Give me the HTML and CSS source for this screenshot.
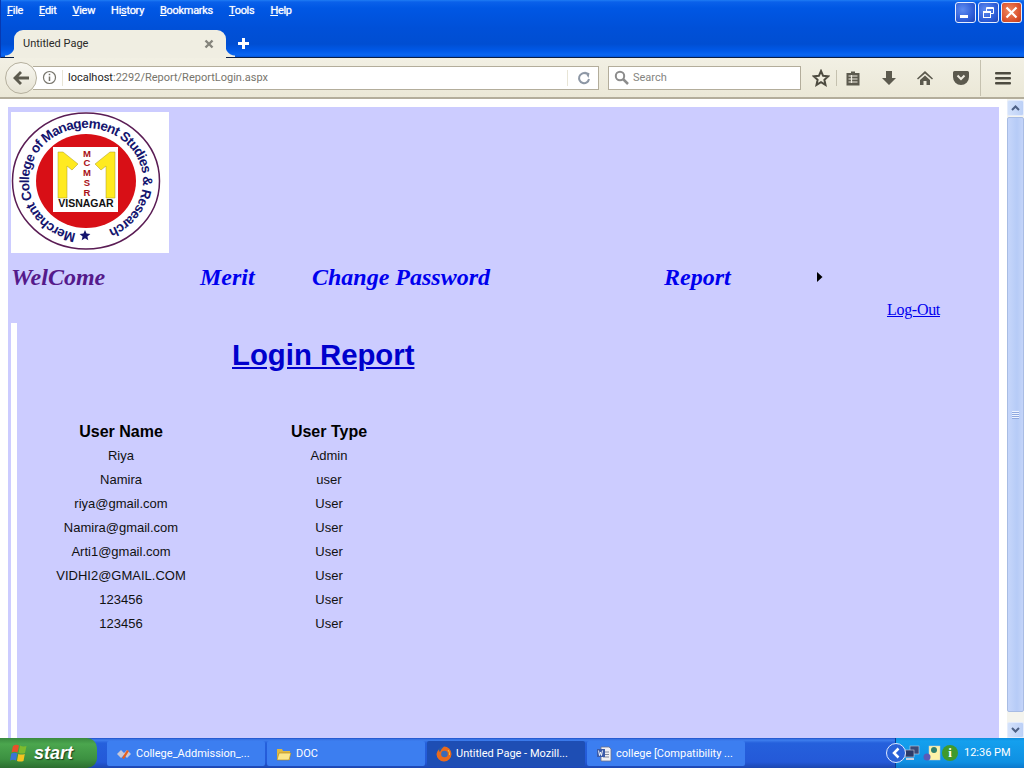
FILE: index.html
```html
<!DOCTYPE html>
<html lang="en">
<head>
<meta charset="utf-8">
<title>Untitled Page</title>
<link rel="stylesheet" href="styles.css">
</head>
<body>
<div class="screen">
  <header class="titlebar">
    <div class="menu-row">
      <nav class="menubar">
        <span><u>F</u>ile</span><span><u>E</u>dit</span><span><u>V</u>iew</span><span>Hi<u>s</u>tory</span><span><u>B</u>ookmarks</span><span><u>T</u>ools</span><span><u>H</u>elp</span>
      </nav>
      <div class="winbtns">
        <div class="winbtn"><svg width="19" height="19" viewBox="0 0 19 19"><rect x="4" y="12" width="8" height="3" fill="#fff"/></svg></div>
        <div class="winbtn"><svg width="19" height="19" viewBox="0 0 19 19" fill="none" stroke="#fff"><rect x="4.500" y="8.500" width="7" height="6"/><path d="M4.500 9.500h7M7.500 8V4.500h7v6H12M7.500 5.500h7"/></svg></div>
        <div class="winbtn winclose"><svg width="19" height="19" viewBox="0 0 19 19" stroke="#fff" stroke-width="2.200"><path d="M4.500 4.500l10 10M14.500 4.500l-10 10"/></svg></div>
      </div>
    </div>
    <div class="tab-row">
      <div class="tab">
        <span class="tab-label">Untitled Page</span>
        <svg class="tab-x" width="10" height="10" viewBox="0 0 10 10" stroke="#85847c" stroke-width="2.400"><path d="M1.500 1.500l7 7M8.500 1.500l-7 7"/></svg>
      </div>
      <svg class="tab-new" width="13" height="13" viewBox="0 0 13 13"><path d="M5 1h3v4h4v3H8v4H5V8H1V5h4z" fill="#fff"/></svg>
    </div>
  </header>

  <div class="toolbar">
    <div class="back">
      <svg width="18" height="16" viewBox="0 0 18 16"><path d="M8 1l2 2-3.500 3.500H17v3H6.500L10 13l-2 2L1 8z" fill="#5c5a4e"/></svg>
    </div>
    <div class="urlbar">
      <svg class="info" width="15" height="15" viewBox="0 0 15 15" fill="none" stroke="#77756c" stroke-width="1.200"><circle cx="7.500" cy="7.500" r="6"/><path d="M7.500 6.500v4.500M7.500 3.800v1.400" stroke-width="1.500"/></svg>
      <span class="urlsep"></span>
      <span class="url"><span class="host">localhost</span>:2292/Report/ReportLogin.aspx</span>
      <span class="urlsep urlsep-right"></span>
      <svg class="reload" width="14" height="14" viewBox="0 0 14 14" fill="none" stroke="#8d97a5" stroke-width="2"><path d="M12 8a5 5 0 1 1-3-5.500"/><path d="M7.500 .5l5 1.700-1 4.800z" fill="#8d97a5" stroke="none"/></svg>
    </div>
    <div class="searchbar">
      <svg width="16" height="16" viewBox="0 0 16 16" fill="none" stroke="#8c8c8c" stroke-width="2"><circle cx="6" cy="6" r="4.200"/><path d="M9 9l5 5" stroke-width="2.500"/></svg>
      <span>Search</span>
    </div>
    <div class="tools">
      <svg class="t-star" width="18" height="18" viewBox="0 0 18 18"><path d="M9 2l2.100 4.800 5.200.5-3.900 3.500 1.100 5.100L9 13.200l-4.500 2.700 1.100-5.100L1.700 7.300l5.200-.5z" fill="none" stroke="#4d4b40" stroke-width="2"/></svg>
      <span class="t-sep"></span>
      <svg class="t-clip" width="16" height="16" viewBox="0 0 16 16"><path d="M6 1.500h4V3h4.500v12.500h-13V3H6z" fill="#5c5a4e"/><path d="M3.500 6h9M3.500 9h9M3.500 12h9M6.500 5v8" stroke="#efece0" stroke-width="1.200"/></svg>
      <svg class="t-down" width="16" height="16" viewBox="0 0 16 16"><path d="M5 1h6v7h4l-7 7-7-7h4z" fill="#5c5a4e"/></svg>
      <svg class="t-home" width="18" height="16" viewBox="0 0 18 16"><path d="M9 1L1 8.500l1 1L9 3.500l7 6 1-1zM4 10l5-4.500 5 4.500v5h-3.500v-4h-3v4H4z" fill="#5c5a4e"/></svg>
      <svg class="t-pocket" width="18" height="16" viewBox="0 0 18 16"><path d="M2.500 1h13A1.500 1.500 0 0 1 17 2.500V7a8 8 0 0 1-16 0V2.500A1.500 1.500 0 0 1 2.500 1z" fill="#5c5a4e"/><path d="M5.500 5.500L9 9l3.500-3.500" fill="none" stroke="#efece0" stroke-width="2"/></svg>
      <span class="t-sep t-sep-tall"></span>
      <svg class="t-menu" width="16" height="14" viewBox="0 0 16 14" fill="#4d4b40"><rect width="16" height="2.500" y="1" rx="1"/><rect width="16" height="2.500" y="6" rx="1"/><rect width="16" height="2.500" y="11" rx="1"/></svg>
    </div>
  </div>

  <div class="viewport">
    <main class="page">
      <div class="logo">
        <svg width="158" height="141" viewBox="0 0 158 141">
          <defs>
            <path id="ringtext" d="M65 121.200 A57 53 0 1 1 88 120.600"/>
          </defs>
          <ellipse cx="75" cy="69" rx="73.500" ry="68" fill="#fff" stroke="#5a1c54" stroke-width="1.500"/>
          <ellipse cx="75" cy="69" rx="50" ry="47" fill="#d80f16"/>
          <text class="ring" font-size="13.500"><textPath href="#ringtext" textLength="312" lengthAdjust="spacing">Merchant College of Management Studies &amp; Research</textPath></text>
          <rect x="42" y="35" width="65" height="65" fill="#fff"/>
          <path d="M47 40h5l15 12-6 6-5-4v32h-9zM104 40h-5L84 52l6 6 5-4v32h9z" fill="#ffea20" stroke="#a89a20" stroke-width=".5"/>
          <text class="mcmsr"><tspan x="76" y="45">M</tspan><tspan x="76" y="54">C</tspan><tspan x="76" y="64">M</tspan><tspan x="76" y="74">S</tspan><tspan x="76" y="84">R</tspan></text>
          <text class="visnagar" x="75" y="95">VISNAGAR</text>
          <path class="ringstar" d="M74 118l1.500 3.600 3.900.3-3 2.500.9 3.800-3.300-2-3.300 2 .9-3.800-3-2.500 3.900-.3z"/>
        </svg>
      </div>
      <nav class="sitenav">
        <a class="visited" href="#">WelCome</a>
        <a href="#">Merit</a>
        <a href="#">Change Password</a>
        <a href="#">Report</a>
        <svg class="nav-arrow" width="6" height="10" viewBox="0 0 6 10"><path d="M0 0l5.500 5L0 10z" fill="#000"/></svg>
      </nav>
      <div class="logout-row"><a href="#">Log-Out</a></div>
      <section class="panel">
        <h1 class="report-title"><a href="#">Login Report</a></h1>
        <table class="report">
          <thead>
            <tr><th>User Name</th><th>User Type</th></tr>
          </thead>
          <tbody>
            <tr><td>Riya</td><td>Admin</td></tr>
            <tr><td>Namira</td><td>user</td></tr>
            <tr><td>riya@gmail.com</td><td>User</td></tr>
            <tr><td>Namira@gmail.com</td><td>User</td></tr>
            <tr><td>Arti1@gmail.com</td><td>User</td></tr>
            <tr><td>VIDHI2@GMAIL.COM</td><td>User</td></tr>
            <tr><td>123456</td><td>User</td></tr>
            <tr><td>123456</td><td>User</td></tr>
          </tbody>
        </table>
      </section>
    </main>
    <aside class="scrollbar">
      <div class="sb-btn"><svg width="9" height="6" viewBox="0 0 9 6" fill="none" stroke="#4d6185" stroke-width="2"><path d="M1 5l3.500-3.500L8 5"/></svg></div>
      <div class="sb-thumb"><span class="grip"></span></div>
      <div class="sb-btn sb-down"><svg width="9" height="6" viewBox="0 0 9 6" fill="none" stroke="#4d6185" stroke-width="2"><path d="M1 1l3.500 3.500L8 1"/></svg></div>
    </aside>
  </div>

  <footer class="taskbar">
    <div class="start">
      <svg width="20" height="18" viewBox="0 0 20 18"><path d="M3 2q3-2 6-.5l-1.500 7q-3-1.500-6 0z" fill="#e8502a"/><path d="M10 1.500q3 1.500 6.500.5L15 9q-3 1-6.500 0z" fill="#7dbb2e"/><path d="M1.300 9.500q3-1.500 6 0l-1.300 7q-3-1.500-6 0z" fill="#3c74d6"/><path d="M8.300 10q3 1 6.500 0l-1.300 7q-3 1-6.500 0z" fill="#f3c420"/></svg>
      <span>start</span>
    </div>
    <div class="tasks">
      <div class="task">
        <svg width="16" height="16" viewBox="0 0 16 16"><path d="M1 8l4-4 3 3 3-3 4 4-4 4-3-3-3 3z" fill="#c8c8d8"/><path d="M6 12l5-8 2 1-5 8z" fill="#e8601c"/></svg>
        <span>College_Addmission_...</span>
      </div>
      <div class="task">
        <svg width="16" height="14" viewBox="0 0 16 14"><path d="M1 2h5l1 2h7v9H1z" fill="#e0b840"/><path d="M1 13l2-7h12l-2 7z" fill="#fbe68c" stroke="#a88420" stroke-width=".6"/></svg>
        <span>DOC</span>
      </div>
      <div class="task task-active">
        <svg width="16" height="16" viewBox="0 0 16 16"><circle cx="8" cy="8" r="7.500" fill="#2a5aa8"/><path d="M8 .5a7.500 7.500 0 1 1-7.500 7.500q.5-3 2.500-4.500 0 2 1 2.500Q5 3 8 .5z" fill="#ea6a1c"/><circle cx="8.500" cy="8" r="3.300" fill="#3a6ab8"/><path d="M12 4q2 2 1.500 5" stroke="#f8c030" fill="none"/></svg>
        <span>Untitled Page - Mozill...</span>
      </div>
      <div class="task">
        <svg width="16" height="16" viewBox="0 0 16 16"><path d="M5 1h8l2 2v12H5z" fill="#f0f0f4" stroke="#6a7088" stroke-width=".8"/><path d="M7 6h6M7 8.500h6M7 11h6" stroke="#8088a0"/><rect x="1" y="3" width="8" height="8" fill="#3a5aa8"/><path d="M2.500 4.500l1 5 1-3.500 1 3.500 1-5" stroke="#fff" fill="none" stroke-width=".9"/></svg>
        <span>college [Compatibility ...</span>
      </div>
    </div>
    <div class="tray">
      <div class="tray-back"><svg width="8" height="12" viewBox="0 0 8 12" fill="none" stroke="#fff" stroke-width="2.500"><path d="M6.500 1.500L2 6l4.500 4.500"/></svg></div>
      <svg width="16" height="16" viewBox="0 0 16 16"><rect x="6" y="1" width="9" height="8" fill="#3a4a78" stroke="#c8d0e0" stroke-width=".6"/><rect x="1" y="5" width="9" height="7" fill="#2a3a68" stroke="#c8d0e0" stroke-width=".6"/><rect x="2" y="13" width="8" height="2" fill="#c8d0e0"/></svg>
      <svg class="tray-note" width="18" height="16" viewBox="0 0 18 16"><rect x="6" y="1" width="11" height="14" fill="#fdf2a8" stroke="#ccc" stroke-width=".5"/><circle cx="11" cy="5" r="3" fill="#2f7f6f"/><circle cx="4" cy="12" r="3.500" fill="#5a5ab8"/></svg>
      <div class="tray-info">i</div>
      <span class="clock">12:36 PM</span>
    </div>
  </footer>
</div>
</body>
</html>
```

FILE: styles.css
```css
* { box-sizing: border-box; }
html, body { margin: 0; padding: 0; height: 100%; overflow: hidden; }
body { font-family: "Liberation Sans", Arial, sans-serif; }

.screen { width: 1024px; height: 768px; display: flex; flex-direction: column; background: #fff; }

/* Title bar */
.titlebar {
  height: 58px; flex: none; display: flex; flex-direction: column;
  background: linear-gradient(180deg, #1f7cf4 0, #0a60ea 2px, #0057e4 8px, #0050d8 28px, #004ed2 44px, #0058e6 50px, #0a66f2 55px, #0455d8 57px, #0a1e44 57px, #0a1e44 58px);
  border-left: 1px solid #0838b0;
}
.menu-row { height: 30px; display: flex; justify-content: space-between; align-items: flex-start; }
.menubar { display: flex; gap: 16px; padding: 3px 0 0 6px; font: 11px/15px Roboto, Tahoma, sans-serif; letter-spacing: -.3px; color: #fff; text-shadow: 0 0 1px #cfe0ff; }
.menubar u { text-decoration-thickness: 1px; text-underline-offset: 1px; }
.winbtns { display: flex; gap: 2px; padding: 2px 2px 0 0; }
.winbtn {
  width: 21px; height: 21px; display: flex; align-items: center; justify-content: center;
  border: 1px solid #e6eeff; border-radius: 3px;
  background: radial-gradient(circle at 35% 35%, #5f8cf0 0, #2f5ed8 60%, #1c44b8 100%);
}
.winclose { background: radial-gradient(circle at 40% 40%, #ee8a62 0, #dc5530 60%, #bf3a18 100%); }
.tab-row { height: 27px; display: flex; align-items: center; padding-left: 13px; }
.tab {
  position: relative;
  width: 212px; height: 28px; margin-top: 1px; display: flex; align-items: center; justify-content: space-between;
  padding: 0 12px 0 9px; background: #f0eee2; border-radius: 9px 9px 0 0;
  font: 11px/16px Roboto, Tahoma, sans-serif; color: #2a2a28;
}
.tab::before, .tab::after { content: ""; position: absolute; bottom: 1px; width: 9px; height: 11px; }
.tab::before { left: -9px; background: radial-gradient(circle at 0 0, transparent 9px, #f0eee2 10px); }
.tab::after { right: -9px; background: radial-gradient(circle at 100% 0, transparent 9px, #f0eee2 10px); }
.tab-new { margin-left: 11px; }

/* Toolbar */
.toolbar {
  height: 41px; flex: none; display: flex; align-items: center; padding: 0 0 0 5px;
  background: linear-gradient(180deg, #f2f0e4, #ebe8d7); border-bottom: 2px solid #b3ad9b;
}
.back {
  width: 32px; height: 32px; flex: none; display: flex; align-items: center; justify-content: center; position: relative; z-index: 1;
  border: 1px solid #b5b09e; border-radius: 50%; background: linear-gradient(180deg, #f8f7f0, #e6e3d4);
}
.urlbar {
  width: 566px; height: 24px; margin-left: -4px; flex: none; display: flex; align-items: center; padding-left: 9px;
  background: #fff; border: 1px solid #b3ad9b; border-left: 0; font: 11px/16px Roboto, Tahoma, sans-serif; color: #77756c;
}
.urlsep { width: 1px; height: 16px; background: #e8e5d6; margin: 0 5px 0 5px; }
.url { flex: 1; }
.host { color: #222; }
.urlsep-right { margin: 0 9px 0 0; }
.reload { margin-right: 7px; }
.searchbar {
  width: 193px; height: 24px; margin-left: 9px; flex: none; display: flex; align-items: center; gap: 3px; padding-left: 5px;
  background: #fff; border: 1px solid #b3ad9b; font: 11px/16px Roboto, Tahoma, sans-serif; color: #85857f;
}
.tools { flex: 1; display: flex; align-items: center; height: 100%; padding-left: 11px; }
.t-sep { width: 1px; height: 16px; background: #c5c1af; margin: 0 8px 0 6px; }
.t-down { margin-left: 20px; }
.t-home { margin-left: 19px; }
.t-pocket { margin-left: 18px; }
.t-sep-tall { height: 36px; margin: 0 14px 0 10px; }

/* Page */
.viewport { flex: 1; min-height: 0; display: flex; background: #fff; }
.page { width: 1007px; padding: 8px 8px 0; display: flex; flex-direction: column; }
.page > * { background-color: #ccccff; }
.logo { padding: 5px 0 0 3px; height: 146px; flex: none; }
.logo svg { display: block; background: #fff; }
.ring { font-family: "Liberation Sans", sans-serif; font-weight: 700; fill: #14146e; }
.ringstar { fill: #14146e; }
.mcmsr { font: 700 9.500px "Liberation Sans", sans-serif; fill: #a81018; text-anchor: middle; }
.visnagar { font: 700 10.500px "Liberation Sans", sans-serif; fill: #111; text-anchor: middle; }

.sitenav {
  height: 48px; flex: none; display: grid; grid-template-columns: 189px 112px 352px 153px 6px; align-items: center; padding: 0 0 0 3px;
  font: italic 700 24px/28px "Liberation Serif", "Times New Roman", serif;
}
.sitenav a { color: #0000ee; text-decoration: none; }
.sitenav a.visited { color: #551a8b; }
.logout-row { height: 22px; flex: none; padding-right: 59px; text-align: right; font: 16px/18px "Liberation Serif", "Times New Roman", serif; letter-spacing: -.3px; }
.logout-row a { color: #0000ee; }

.panel { flex: 1; min-height: 0; margin-left: 0; padding-left: 9px; background: linear-gradient(90deg, #ccccff 0, #ccccff 3px, #fff 3px, #fff 9px, #ccccff 9px); }
.report-title { margin: 0; height: 96px; padding: 14px 0 0 215px; font: 700 29.330px/36px "Liberation Sans", Arial, sans-serif; }
.report-title a { color: #0000cc; }
.report { border-collapse: collapse; table-layout: fixed; width: 416px; }
.report th, .report td { width: 208px; height: 24px; padding: 0; text-align: center; color: #111; }
.report th { padding-top: 2px; font: 700 16px/18px "Liberation Sans", Arial, sans-serif; color: #000; }
.report td { padding-top: 2px; font: 13px/16px "Liberation Sans", Arial, sans-serif; }

/* Scrollbar */
.scrollbar { width: 17px; flex: none; display: flex; flex-direction: column; padding: 1px 0 0; background: #f4f4ee; }
.sb-btn {
  height: 16px; flex: none; display: flex; align-items: center; justify-content: center;
  border: 1px solid #e4ecfc; border-radius: 2px; background: linear-gradient(90deg, #d4e2fb, #bcd0f6);
}
.sb-thumb {
  height: 595px; margin-top: 1px; flex: none; display: flex; align-items: center; justify-content: center;
  border: 1px solid #a8bce4; border-radius: 2px; background: linear-gradient(90deg, #c6d6fa, #b6cbf7 60%, #c4d4f8);
}
.grip { width: 7px; height: 8px; background: repeating-linear-gradient(180deg, #eef3ff 0, #eef3ff 1px, #8fa8e0 1px, #8fa8e0 2px); }
.sb-down { margin-top: auto; }

/* Taskbar */
.taskbar {
  height: 30px; flex: none; display: flex; align-items: stretch; color: #fff;
  background: linear-gradient(180deg, #1e50c8 0, #3f7fee 2px, #2560dc 5px, #2459d8 24px, #1c46b0 30px);
}
.start {
  width: 97px; flex: none; display: flex; align-items: center; gap: 4px; padding: 0 0 0 10px; border-radius: 0 10px 10px 0;
  background: linear-gradient(180deg, #3a8a3f 0, #4ba64e 20%, #3c9141 70%, #2c6e30 100%);
  font: italic 700 18px/20px "Liberation Sans", Arial, sans-serif; text-shadow: 1px 1px 1px #1c3c1c;
}
.tasks { display: flex; gap: 2px; padding: 3px 0 2px 10px; flex: none; }
.task {
  width: 158px; display: flex; align-items: center; gap: 4px; padding-left: 9px; border-radius: 2px;
  background: #3c7ef0; font: 11px/16px Roboto, Tahoma, sans-serif; white-space: nowrap; overflow: hidden;
}
.task-active { background: #1e4eb4; }
.tray {
  width: 129px; margin-left: auto; position: relative; display: flex; align-items: center; padding-left: 8px;
  background: linear-gradient(180deg, #0f8fe0 0, #14a0ee 3px, #0f90e2 24px, #0c78cc 30px); border-left: 1px solid #0a3a90;
}
.tray-back {
  position: absolute; left: -10px; top: 5px; width: 20px; height: 20px; display: flex; align-items: center; justify-content: center;
  border: 1px solid #dfe9ff; border-radius: 50%; background: #2a62d8;
}
.tray-note { margin-left: 3px; }
.tray-info {
  width: 16px; height: 16px; margin-left: 1px; border-radius: 50%; background: #3f9a2c;
  font: 700 13px/16px "Liberation Serif", serif; text-align: center;
}
.clock { margin-left: 6px; font: 11px/16px Roboto, Tahoma, sans-serif; white-space: nowrap; }
```
